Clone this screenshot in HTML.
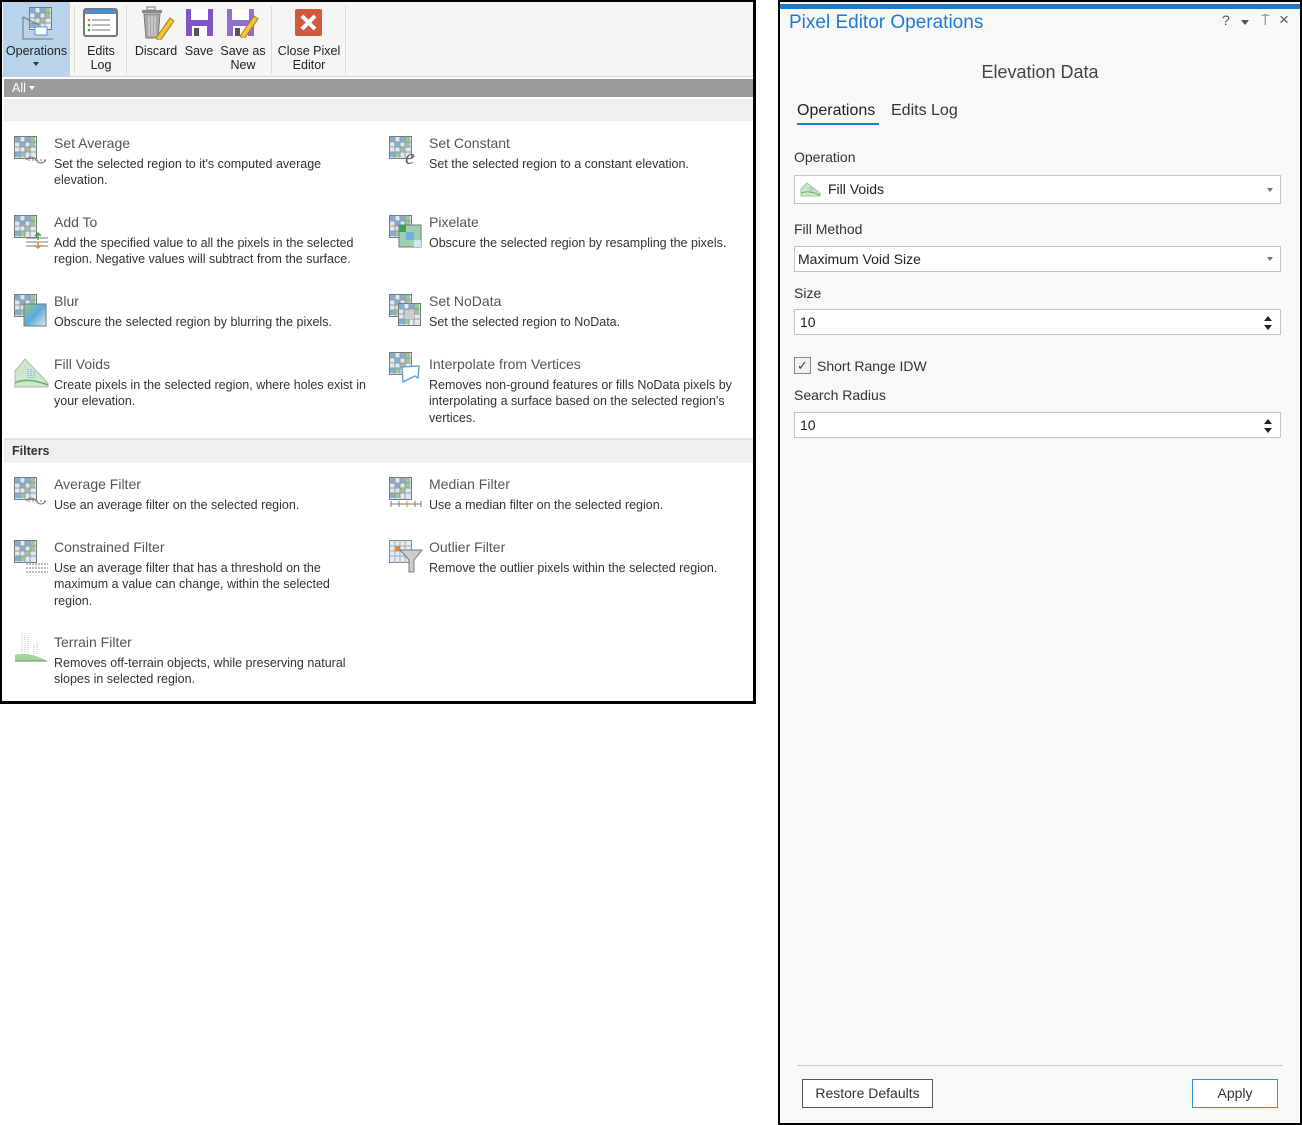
<!DOCTYPE html>
<html><head><meta charset="utf-8"><style>
*{margin:0;padding:0;box-sizing:border-box}
body{width:1302px;height:1125px;background:#fff;position:relative;overflow:hidden;font-family:"Liberation Sans",sans-serif;color:#333}
.a{position:absolute}
#L{left:0;top:0;width:756px;height:704px;border:2px solid #000;border-right-width:3px;border-bottom-width:3px;background:#fff}
#tb{left:0;top:0;width:751px;height:75px;background:#f5f5f5;border-bottom:1px solid #d8d8d8}
.btn{position:absolute;top:0;height:75px;font-size:12.5px;text-align:center;line-height:14px;color:#222}
.sep{position:absolute;top:4px;width:1px;height:68px;background:#dcdcdc}
.t{font-size:14px;color:#555;white-space:nowrap}
.d{font-size:12.5px;line-height:16.3px;color:#333;width:312px}
.it{position:absolute}
.it svg{position:absolute;left:0;top:0}
.it .t{position:absolute;left:40px;top:-1px}
.it .d{position:absolute;left:40px;top:20px}
#R{left:778px;top:0;width:524px;height:1125px;border:2px solid #000;background:#f7f8f8}
.lbl{position:absolute;left:14px;font-size:14px;color:#333}
.box{position:absolute;left:14px;width:487px;height:29px;background:#fff;border:1px solid #c4c4c4;font-size:14px;line-height:27px;padding-left:5px;color:#222}
.dd{position:absolute;right:7px;top:12px;width:0;height:0;border-left:3px solid transparent;border-right:3px solid transparent;border-top:4px solid #777}
.sp{position:absolute;right:8px;top:6px;width:8px;font-size:0}
.sp:before{content:"";position:absolute;top:0;left:0;border-left:4px solid transparent;border-right:4px solid transparent;border-bottom:5px solid #222}
.sp:after{content:"";position:absolute;top:9px;left:0;border-left:4px solid transparent;border-right:4px solid transparent;border-top:5px solid #222}
</style></head><body>
<svg width="0" height="0" style="position:absolute"><defs>
<g id="grid"><rect x="0.5" y="0.5" width="22" height="22" fill="#dfe9f2" stroke="#777"/>
<g fill="#7fb0dd"><rect x="1" y="1" width="5" height="5"/><rect x="11" y="1" width="5" height="5"/><rect x="6" y="6" width="5" height="5"/><rect x="1" y="16" width="5" height="5"/></g>
<g fill="#9cc69a"><rect x="16" y="1" width="5" height="5"/><rect x="11" y="11" width="5" height="5"/><rect x="16" y="6" width="5" height="5"/><rect x="6" y="16" width="5" height="5"/></g>
<path d="M6 0.5V22.5M11 0.5V22.5M16 0.5V22.5M0.5 6H22.5M0.5 11H22.5M0.5 16H22.5" stroke="#999" stroke-width="1"/></g>
</defs></svg>

<div id="L" class="a">
 <div id="tb" class="a">
  <div class="btn" style="left:1px;width:67px;background:#b8d3ea"><svg class="a" style="left:16px;top:3px" width="36" height="36"><use href="#grid" x="10" y="2"/><path d="M4 12L20 20M4 12V34H34" stroke="#777" fill="none"/><rect x="16" y="22" width="12" height="8" fill="#fff" stroke="#5a9ad5"/></svg><div class="a" style="left:0;top:42px;width:67px">Operations</div><div class="a" style="left:30px;top:60px;border-left:3px solid transparent;border-right:3px solid transparent;border-top:4px solid #333"></div></div>
  <div class="sep" style="left:72px"></div>
  <div class="btn" style="left:76px;width:46px"><svg class="a" style="left:5px;top:6px" width="36" height="30"><rect x="1" y="1" width="33" height="27" rx="2" fill="#fff" stroke="#777" stroke-width="2"/><rect x="2" y="2" width="31" height="4" fill="#4a8fd6"/><path d="M9 12h18M9 17h18M9 22h18" stroke="#777"/><circle cx="6" cy="12" r="1.3" fill="#e07a3a"/><circle cx="6" cy="17" r="1.3" fill="#3fa24a"/><circle cx="6" cy="22" r="1.3" fill="#3fa24a"/></svg><div class="a" style="left:0;top:42px;width:46px">Edits<br>Log</div></div>
  <div class="sep" style="left:124px"></div>
  <div class="btn" style="left:130px;width:48px"><svg class="a" style="left:8px;top:4px" width="36" height="34"><rect x="7" y="1" width="8" height="3" fill="none" stroke="#777"/><rect x="2" y="4" width="20" height="3" fill="#888"/><path d="M4 8h16l-2 24H6z" fill="#aaa" stroke="#777"/><path d="M9 10v20M12 10v20M15 10v20" stroke="#ddd"/><path d="M16 32l14-20 4 3-14 20z" fill="#f2c33c" stroke="#a67c1b"/></svg><div class="a" style="left:0;top:42px;width:48px">Discard</div></div>
  <div class="btn" style="left:180px;width:34px"><svg class="a" style="left:3px;top:6px" width="30" height="30"><path d="M1 1h27v27H1z" fill="#7e57c2"/><rect x="6" y="1" width="17" height="11" fill="#fff"/><rect x="7" y="18" width="15" height="10" fill="#fff"/><rect x="9" y="20" width="5" height="8" fill="#555"/></svg><div class="a" style="left:0;top:42px;width:34px">Save</div></div>
  <div class="btn" style="left:216px;width:50px"><svg class="a" style="left:8px;top:6px" width="36" height="30"><path d="M1 1h27v27H1z" fill="#8f6fd0"/><rect x="6" y="1" width="17" height="11" fill="#fff"/><rect x="7" y="18" width="15" height="10" fill="#fff"/><rect x="9" y="20" width="5" height="8" fill="#555"/><path d="M14 28l14-20 4 3-14 20z" fill="#f2c33c" stroke="#a67c1b"/></svg><div class="a" style="left:0;top:42px;width:50px">Save as<br>New</div></div>
  <div class="sep" style="left:269px"></div>
  <div class="btn" style="left:272px;width:70px"><svg class="a" style="left:20px;top:6px" width="30" height="30"><rect x="1" y="1" width="27" height="27" rx="2" fill="#d25a3a"/><path d="M8 8l13 13M21 8L8 21" stroke="#fff" stroke-width="4"/></svg><div class="a" style="left:0;top:42px;width:70px">Close Pixel<br>Editor</div></div>
  <div class="sep" style="left:343px"></div>
 </div>
 <div class="a" style="left:2px;top:77px;width:749px;height:18px;background:#9a9a9a;color:#fff;font-size:12.5px;line-height:18px;padding-left:8px">All<span style="display:inline-block;margin-left:3px;border-left:3px solid transparent;border-right:3px solid transparent;border-top:4px solid #fff;vertical-align:2px"></span></div>
 <div class="a" style="left:2px;top:97px;width:749px;height:22px;background:#efefef"></div>

 <div class="it" style="left:12px;top:134px"><svg width="40" height="34"><use href="#grid"/><path d="M12 24q5 -6 10 0t10 0" stroke="#777" fill="none"/><path d="M14 24h20" stroke="#777" stroke-dasharray="2 2"/></svg><div class="t">Set Average</div><div class="d">Set the selected region to it's computed average elevation.</div></div>
 <div class="it" style="left:387px;top:134px"><svg width="40" height="34"><use href="#grid"/><text x="16" y="28" font-family="Liberation Serif" font-style="italic" font-size="22" fill="#666">e</text></svg><div class="t">Set Constant</div><div class="d" style="width:330px">Set the selected region to a constant elevation.</div></div>

 <div class="it" style="left:12px;top:213px"><svg width="40" height="34"><use href="#grid"/><path d="M12 23h22M12 27h22M12 31h22" stroke="#777"/><path d="M24 25v-6M21 21l3-3 3 3" stroke="#3fa24a" fill="none" stroke-width="1.5"/><path d="M24 27v5M21 30l3 3 3-3" stroke="#e08a2a" fill="none" stroke-width="1.5"/></svg><div class="t">Add To</div><div class="d">Add the specified value to all the pixels in the selected region. Negative values will subtract from the surface.</div></div>
 <div class="it" style="left:387px;top:213px"><svg width="40" height="34"><use href="#grid"/><rect x="10" y="10" width="22" height="22" fill="#9dd2b0" stroke="#777"/><rect x="10" y="10" width="7" height="7" fill="#3fa25a"/><rect x="17" y="17" width="8" height="8" fill="#6fb0e0"/><rect x="25" y="25" width="7" height="7" fill="#cde6f3"/></svg><div class="t">Pixelate</div><div class="d" style="width:330px">Obscure the selected region by resampling the pixels.</div></div>

 <div class="it" style="left:12px;top:292px"><svg width="40" height="34"><defs><linearGradient id="bg1" x1="0" y1="0" x2="1" y2="1"><stop offset="0" stop-color="#8ccc8c"/><stop offset=".5" stop-color="#5aa8dc"/><stop offset="1" stop-color="#e6f2e0"/></linearGradient></defs><use href="#grid"/><rect x="10" y="10" width="22" height="22" fill="url(#bg1)" stroke="#777"/></svg><div class="t">Blur</div><div class="d">Obscure the selected region by blurring the pixels.</div></div>
 <div class="it" style="left:387px;top:292px"><svg width="40" height="34"><use href="#grid"/><use href="#grid" x="9" y="9"/><rect x="16" y="16" width="9" height="9" fill="#ccc"/></svg><div class="t">Set NoData</div><div class="d" style="width:330px">Set the selected region to NoData.</div></div>

 <div class="it" style="left:12px;top:355px"><svg width="40" height="34"><path d="M1 30V14L11 2L34 26V30Z" fill="#cfe6cc" stroke="#9cc69a"/><path d="M1 26q12-6 33 2" stroke="#6aab6a" fill="none" stroke-width="1.5"/><path d="M14 12v10M17 12v10M20 14v8" stroke="#5a9ad5" stroke-dasharray="1 1"/></svg><div class="t">Fill Voids</div><div class="d">Create pixels in the selected region, where holes exist in your elevation.</div></div>
 <div class="it" style="left:387px;top:350px"><svg width="40" height="34"><use href="#grid"/><path d="M13 15L30 14L29 26L26 24L14 30Z" fill="#fff" stroke="#5a9ad5" stroke-width="1.3"/></svg><div class="t" style="top:4px">Interpolate from Vertices</div><div class="d" style="top:25px;width:315px">Removes non-ground features or fills NoData pixels by interpolating a surface based on the selected region's vertices.</div></div>

 <div class="a" style="left:2px;top:436px;width:749px;height:25px;background:#efefef;border-top:2px solid #e4e4e4;font-size:12.5px;font-weight:bold;color:#333;line-height:22px;padding-left:8px">Filters</div>

 <div class="it" style="left:12px;top:475px"><svg width="40" height="34"><use href="#grid"/><path d="M12 24q5 -6 10 0t10 0" stroke="#777" fill="none"/><path d="M14 24h20" stroke="#777" stroke-dasharray="2 2"/></svg><div class="t">Average Filter</div><div class="d">Use an average filter on the selected region.</div></div>
 <div class="it" style="left:387px;top:475px"><svg width="40" height="34"><use href="#grid"/><path d="M2 27h30M2 24v6M10 24v6M18 24v6M26 24v6M32 24v6" stroke="#777"/><path d="M18 24v6" stroke="#e08a2a"/></svg><div class="t">Median Filter</div><div class="d" style="width:330px">Use a median filter on the selected region.</div></div>

 <div class="it" style="left:12px;top:538px"><svg width="40" height="34"><use href="#grid"/><path d="M12 24h22M12 28h22M12 32h22" stroke="#777" stroke-dasharray="2 1"/></svg><div class="t">Constrained Filter</div><div class="d">Use an average filter that has a threshold on the maximum a value can change, within the selected region.</div></div>
 <div class="it" style="left:387px;top:538px"><svg width="40" height="34"><rect x="0.5" y="0.5" width="22" height="22" fill="#dfeefa" stroke="#888"/><path d="M6 0.5V22.5M11 0.5V22.5M16 0.5V22.5M0.5 6H22.5M0.5 11H22.5M0.5 16H22.5" stroke="#aaa"/><rect x="6" y="6" width="5" height="5" fill="#e08a2a"/><path d="M11 10h22l-8 10v12h-5V20z" fill="#ccc" stroke="#777"/></svg><div class="t">Outlier Filter</div><div class="d" style="width:330px">Remove the outlier pixels within the selected region.</div></div>

 <div class="it" style="left:12px;top:629px"><svg width="40" height="34"><path d="M1 24q15-4 32 6H1z" fill="#a5d3a0"/><path d="M1 30h32" stroke="#6a8a6a"/><path d="M8 2v20M11 2v20M14 6v16M20 14v10M23 12v12" stroke="#bbb" stroke-dasharray="1 1"/></svg><div class="t" style="top:3px">Terrain Filter</div><div class="d" style="top:24px">Removes off-terrain objects, while preserving natural slopes in selected region.</div></div>
</div>

<div id="R" class="a">
 <div class="a" style="left:0;top:2px;width:520px;height:5px;background:#1e78c8"></div>
 <div class="a" style="left:9px;top:10px;font-size:19px;color:#1f7ad0">Pixel Editor Operations</div>
 <div class="a" style="left:442px;top:10px;font-size:14px;color:#555">?</div>
 <div class="a" style="left:461px;top:18px;border-left:4px solid transparent;border-right:4px solid transparent;border-top:5px solid #555"></div>
 <div class="a" style="left:481px;top:10px;font-size:14px;color:#555">&#x2351;</div>
 <div class="a" style="left:499px;top:8px;font-size:17px;color:#555">×</div>
 <div class="a" style="left:0;top:60px;width:520px;text-align:center;font-size:18px;color:#444">Elevation Data</div>
 <div class="a" style="left:17px;top:100px;font-size:16px;color:#222">Operations</div>
 <div class="a" style="left:17px;top:121px;width:82px;height:2px;background:#1f7ad0"></div>
 <div class="a" style="left:111px;top:100px;font-size:16px;color:#333">Edits Log</div>
 <div class="lbl" style="top:147px">Operation</div>
 <div class="box" style="top:173px;padding-left:33px"><svg class="a" style="left:5px;top:5px" width="22" height="16"><path d="M1 15V8L7 2L20 12V15Z" fill="#cfe6cc" stroke="#9cc69a"/><path d="M1 12q8-3 19 2" stroke="#6aab6a" fill="none"/><path d="M10 6v6M12 7v5" stroke="#5a9ad5" stroke-dasharray="1 1"/></svg>Fill Voids<div class="dd"></div></div>
 <div class="lbl" style="top:219px">Fill Method</div>
 <div class="box" style="top:244px;height:26px;line-height:24px;padding-left:3px">Maximum Void Size<div class="dd" style="top:10px"></div></div>
 <div class="lbl" style="top:283px">Size</div>
 <div class="box" style="top:307px;height:26px;line-height:24px">10<div class="sp"></div></div>
 <div class="a" style="left:14px;top:355px;width:17px;height:17px;border:1px solid #888;background:#f2f2f2;font-size:13px;line-height:15px;text-align:center;color:#444">✓</div>
 <div class="lbl" style="left:37px;top:356px">Short Range IDW</div>
 <div class="lbl" style="top:385px">Search Radius</div>
 <div class="box" style="top:410px;height:26px;line-height:24px">10<div class="sp"></div></div>
 <div class="a" style="left:17px;top:1063px;width:486px;height:1px;background:#ccc"></div>
 <div class="a" style="left:22px;top:1077px;width:131px;height:29px;border:1px solid #555;background:#fff;font-size:14px;line-height:27px;text-align:center;color:#333">Restore Defaults</div>
 <div class="a" style="left:412px;top:1077px;width:86px;height:29px;border:1px solid #3a8fdc;background:#fff;font-size:14px;line-height:27px;text-align:center;color:#333">Apply</div>
</div>
</body></html>
